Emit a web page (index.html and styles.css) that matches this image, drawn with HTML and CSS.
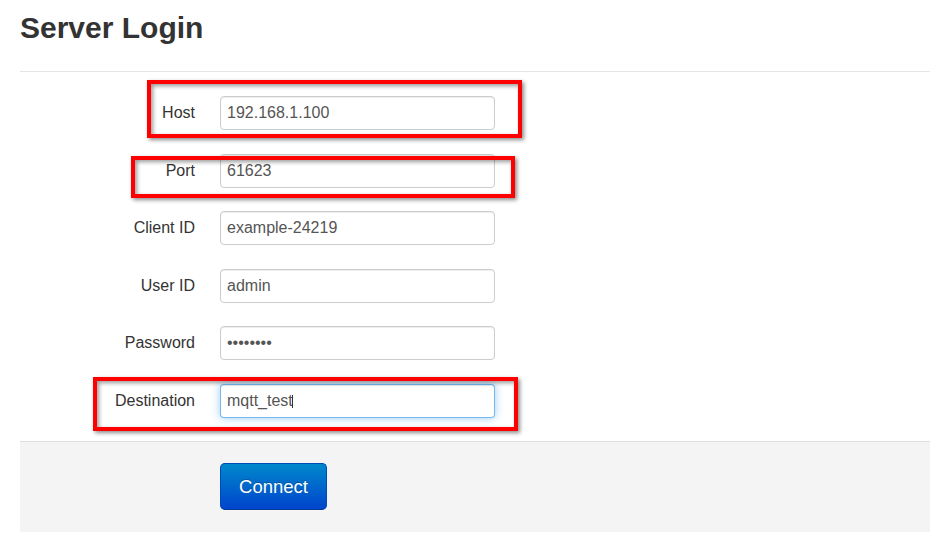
FILE: index.html
```html
<!DOCTYPE html>
<html lang="en">
<head>
    <meta charset="UTF-8">
    <meta name="viewport" content="width=device-width, initial-scale=1.0">
    <title>Server Login</title>
    <link rel="stylesheet" href="styles.css">
</head>
<body>
    <div class="page">
        <h2 class="legend">Server Login</h2>
        <form class="form-horizontal" id="connectForm">
            <div class="control-group">
                <label class="control-label" for="host">Host</label>
                <div class="controls">
                    <input type="text" id="host" value="192.168.1.100">
                </div>
            </div>
            <div class="control-group">
                <label class="control-label" for="port">Port</label>
                <div class="controls">
                    <input type="text" id="port" value="61623">
                </div>
            </div>
            <div class="control-group">
                <label class="control-label" for="clientId">Client ID</label>
                <div class="controls">
                    <input type="text" id="clientId" value="example-24219">
                </div>
            </div>
            <div class="control-group">
                <label class="control-label" for="user">User ID</label>
                <div class="controls">
                    <input type="text" id="user" value="admin">
                </div>
            </div>
            <div class="control-group">
                <label class="control-label" for="password">Password</label>
                <div class="controls">
                    <input type="password" id="password" value="password">
                </div>
            </div>
            <div class="control-group">
                <label class="control-label" for="destination">Destination</label>
                <div class="controls">
                    <input type="text" id="destination" class="focused" value="mqtt_test">
                    <span class="caret"></span>
                </div>
            </div>
            <div class="form-actions">
                <button type="submit" class="btn btn-large btn-primary">Connect</button>
            </div>
        </form>
    </div>

    <!-- annotation frames drawn over the screenshot -->
    <div class="mark mark-host"></div>
    <div class="mark mark-port"></div>
    <div class="mark mark-dest"></div>
</body>
</html>
```

FILE: styles.css
```css
body {
    font-family: "Liberation Sans", Arial, sans-serif;
    background-color: #ffffff;
    color: #333333;
    margin: 0;
    padding: 0;
}

.page {
    padding: 0 10px 0 20px;
}

.legend {
    margin: 0;
    padding: 10px 0 25px 0;
    font-size: 30px;
    line-height: 36px;
    font-weight: bold;
    color: #333333;
    border-bottom: 1px solid #e5e5e5;
}

.form-horizontal {
    margin: 0;
    padding-top: 24px;
}

.control-group {
    display: flex;
    align-items: center;
    margin-bottom: 23.5px;
}

.control-label {
    width: 175px;
    margin-right: 25px;
    text-align: right;
    font-size: 16px;
    color: #333333;
}

.controls {
    position: relative;
}

input {
    box-sizing: border-box;
    width: 275px;
    height: 34px;
    padding: 0 6px;
    border: 1px solid #cccccc;
    border-radius: 4px;
    background-color: #ffffff;
    color: #555555;
    font-family: "Liberation Sans", Arial, sans-serif;
    font-size: 16px;
    box-shadow: inset 0 1px 1px rgba(0, 0, 0, 0.075);
    outline: none;
}

input.focused {
    border-color: rgba(82, 168, 236, 0.8);
    box-shadow: inset 0 1px 1px rgba(0, 0, 0, 0.075), 0 0 8px rgba(82, 168, 236, 0.6);
}

.caret {
    position: absolute;
    left: 72px;
    top: 11px;
    width: 1px;
    height: 13px;
    background-color: #333333;
}

.form-actions {
    margin: 0;
    padding: 21px 0 22px 200px;
    background-color: #f4f4f4;
    border-top: 1px solid #e0e0e0;
}

.btn {
    display: inline-block;
    cursor: pointer;
    font-family: "Liberation Sans", Arial, sans-serif;
}

.btn-large {
    width: 107px;
    height: 47px;
    padding: 0;
    font-size: 18.5px;
    border-radius: 5px;
}

.btn-primary {
    color: #ffffff;
    text-shadow: 0 -1px 0 rgba(0, 0, 0, 0.25);
    background-color: #0066cc;
    background-image: linear-gradient(to bottom, #0088cc, #0044cc);
    border: 1px solid #0049b8;
    border-bottom-color: #003a99;
}

.btn-primary:hover {
    background-image: linear-gradient(to bottom, #0077bb, #003bb3);
}

.mark {
    position: absolute;
    border: 4px solid #ff0000;
    box-sizing: border-box;
    box-shadow: 2px 2px 4px rgba(0, 0, 0, 0.45), inset 2px 2px 4px rgba(0, 0, 0, 0.4);
}

.mark-host {
    left: 147px;
    top: 80px;
    width: 375px;
    height: 58px;
}

.mark-port {
    left: 131px;
    top: 156px;
    width: 384px;
    height: 42px;
}

.mark-dest {
    left: 93px;
    top: 377px;
    width: 425px;
    height: 54px;
}
```
